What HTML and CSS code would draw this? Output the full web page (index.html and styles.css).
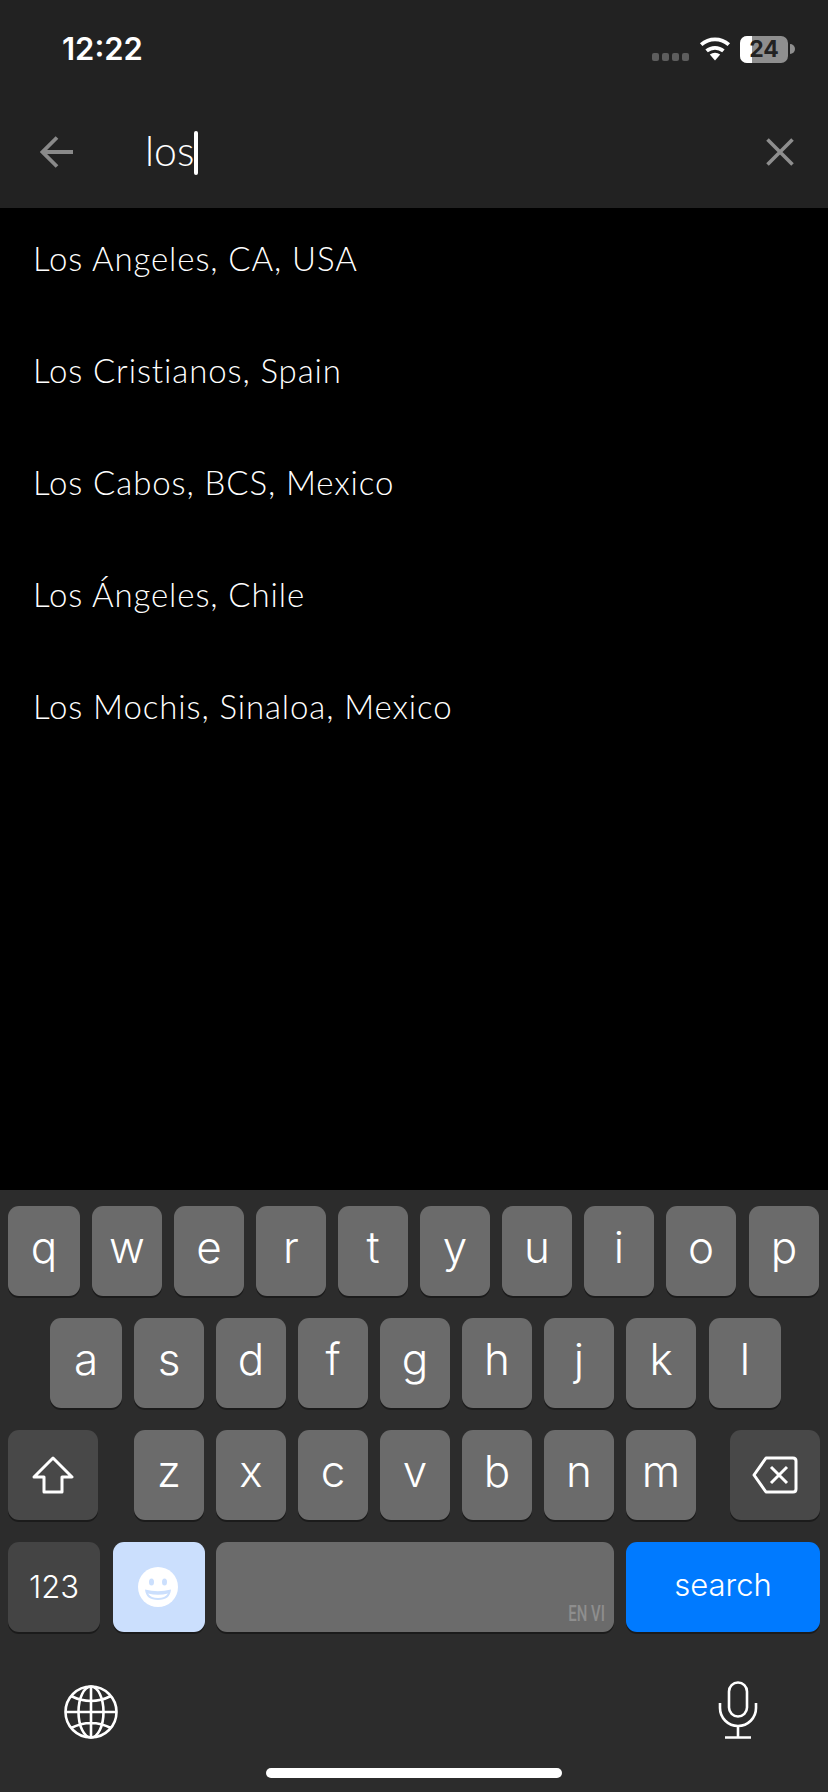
FILE: index.html
```html
<!DOCTYPE html>
<html lang="en">
<head>
    <meta charset="UTF-8">
    <title>Search city</title>
    <link rel="stylesheet" href="styles.css">
</head>
<body>
    <div class="page">
        <header class="top">
            <div class="status">
                <span class="time">12:22</span>
                <div class="status-icons">
                    <div class="signal"><i></i><i></i><i></i><i></i></div>
                    <svg class="wifi" width="32" height="25" viewBox="0 0 32 25">
                        <path d="M16 24.500 L10.800 18.600 A8 8 0 0 1 21.200 18.600 Z" fill="#fff"/>
                        <path d="M7.600 14.900 A13 13 0 0 1 24.400 14.900" fill="none" stroke="#fff" stroke-width="3.800"/>
                        <path d="M2.200 8.600 A21 21 0 0 1 29.800 8.600" fill="none" stroke="#fff" stroke-width="3.800"/>
                    </svg>
                    <div class="battery">
                        <div class="battery-fill"></div>
                        <span class="battery-num">24</span>
                    </div>
                    <div class="battery-nub"></div>
                </div>
            </div>
            <div class="search-row">
                <svg class="back" width="34" height="34" viewBox="0 0 34 34">
                    <path d="M33 17H3M17 2.500L2.500 17L17 31.500" fill="none" stroke="#8a8a8a" stroke-width="3.800"/>
                </svg>
                <div class="query">los<span class="caret"></span></div>
                <svg class="clear" width="28" height="28" viewBox="0 0 28 28">
                    <path d="M1.500 1.500L26.500 26.500M26.500 1.500L1.500 26.500" fill="none" stroke="#8e8e8e" stroke-width="3.600"/>
                </svg>
            </div>
        </header>

        <ul class="results">
            <li>Los Angeles, CA, USA</li>
            <li>Los Cristianos, Spain</li>
            <li>Los Cabos, BCS, Mexico</li>
            <li>Los Ángeles, Chile</li>
            <li>Los Mochis, Sinaloa, Mexico</li>
        </ul>

        <div class="keyboard">
            <div class="kb-row">
                <div class="key first">q</div>
                <div class="key">w</div>
                <div class="key">e</div>
                <div class="key">r</div>
                <div class="key">t</div>
                <div class="key">y</div>
                <div class="key">u</div>
                <div class="key">i</div>
                <div class="key">o</div>
                <div class="key nudge">p</div>
            </div>
            <div class="kb-row indent">
                <div class="key first">a</div>
                <div class="key">s</div>
                <div class="key">d</div>
                <div class="key">f</div>
                <div class="key">g</div>
                <div class="key">h</div>
                <div class="key">j</div>
                <div class="key">k</div>
                <div class="key nudge first">l</div>
            </div>
            <div class="kb-row">
                <div class="key dark wide">
                    <svg width="44" height="38" viewBox="0 0 44 38">
                        <path d="M22 2L41 21H31V36H13V21H3Z" fill="none" stroke="#fff" stroke-width="3" stroke-linejoin="round"/>
                    </svg>
                </div>
                <div class="key letters-start">z</div>
                <div class="key">x</div>
                <div class="key">c</div>
                <div class="key">v</div>
                <div class="key">b</div>
                <div class="key">n</div>
                <div class="key">m</div>
                <div class="key dark wide del">
                    <svg width="46" height="38" viewBox="0 0 46 38">
                        <path d="M14 2H41Q44 2 44 5V33Q44 36 41 36H14L2 19Z" fill="none" stroke="#fff" stroke-width="3" stroke-linejoin="round"/>
                        <path d="M19 11L35 27M35 11L19 27" fill="none" stroke="#fff" stroke-width="3"/>
                    </svg>
                </div>
            </div>
            <div class="kb-row">
                <div class="key dark num">123</div>
                <div class="key emoji">
                    <svg width="40" height="40" viewBox="0 0 40 40">
                        <circle cx="20" cy="20" r="20" fill="#fff"/>
                        <ellipse cx="13.500" cy="15" rx="2.500" ry="3.500" fill="#cbdffd"/>
                        <ellipse cx="26.500" cy="15" rx="2.500" ry="3.500" fill="#cbdffd"/>
                        <path d="M7 22.500Q20 26 33 22.500Q32 33 20 33Q8 33 7 22.500Z" fill="#cbdffd"/>
                        <path d="M10 26.500Q20 29 30 26.500Q27 31 20 31Q13 31 10 26.500Z" fill="#fff"/>
                    </svg>
                </div>
                <div class="key space"><span class="lang">EN VI</span></div>
                <div class="key go">search</div>
            </div>
            <div class="kb-extra">
                <svg width="54" height="54" viewBox="0 0 54 54" fill="none" stroke="#fff" stroke-width="2.600">
                    <circle cx="27" cy="27" r="25.500"/>
                    <ellipse cx="27" cy="27" rx="12.500" ry="25.500"/>
                    <path d="M27 1.500V52.500M1.500 27H52.500M7 11Q27 21 47 11M7 43Q27 33 47 43"/>
                </svg>
                <svg width="40" height="58" viewBox="0 0 40 58" fill="none" stroke="#fff" stroke-width="2.600">
                    <rect x="11" y="1.500" width="18" height="34" rx="9"/>
                    <path d="M2 22V27A18 18 0 0 0 38 27V22M20 45V56M7 56.500H33"/>
                </svg>
            </div>
            <div class="home-bar"></div>
        </div>
    </div>
</body>
</html>
```

FILE: styles.css
```css
*{
    box-sizing: border-box;
}
body{
    margin: 0;
    background-color: #000;
    color: #fff;
    font-family: "Lato", "Liberation Sans", sans-serif;
}
.page{
    width: 828px;
    height: 1792px;
    display: flex;
    flex-direction: column;
    overflow: hidden;
}

/* top bar */
.top{
    height: 208px;
    background-color: #222222;
}
.status{
    height: 106px;
    padding: 30px 33px 0 62px;
    display: flex;
    justify-content: space-between;
}
.time{
    font-family: "Inter", sans-serif;
    font-weight: 600;
    font-size: 31px;
    line-height: 38px;
}
.status-icons{
    display: flex;
    align-items: flex-start;
}
.signal{
    display: flex;
    gap: 2.500px;
    margin: 23px 10px 0 0;
}
.signal i{
    width: 7.500px;
    height: 7.500px;
    border-radius: 2px;
    background-color: #5d5d5d;
}
.wifi{
    margin: 6px 9px 0 0;
}
.battery{
    position: relative;
    width: 48px;
    height: 27px;
    margin-top: 6px;
    border-radius: 7px;
    background-color: #8f8f8f;
    overflow: hidden;
    text-align: center;
}
.battery-fill{
    position: absolute;
    left: 0;
    top: 0;
    bottom: 0;
    width: 12px;
    background-color: #fff;
}
.battery-num{
    position: relative;
    font-family: "Inter", sans-serif;
    font-weight: 700;
    font-size: 23px;
    line-height: 27px;
    color: #222;
}
.battery-nub{
    width: 5px;
    height: 10px;
    margin: 14px 0 0 2px;
    border-radius: 0 5px 5px 0;
    background-color: #8f8f8f;
}
.search-row{
    display: flex;
    align-items: center;
    height: 92px;
    padding: 0 34px 0 40px;
}
.back{
    flex: none;
}
.query{
    flex: 1;
    margin: -2px 0 0 71px;
    display: flex;
    align-items: center;
    font-weight: 300;
    font-size: 41px;
    line-height: 44px;
}
.caret{
    width: 4px;
    height: 44px;
    margin-top: 3px;
    border-radius: 2px;
    background-color: #fff;
}

/* suggestions */
.results{
    flex: 1;
    list-style: none;
    margin: 0;
    padding: 0 0 0 33px;
}
.results li{
    height: 112px;
    padding-top: 28px;
    font-weight: 300;
    font-size: 33px;
    letter-spacing: 0.9px;
    line-height: 44px;
}

/* keyboard */
.keyboard{
    height: 602px;
    padding-top: 16px;
    background-color: #2c2c2c;
    font-family: "Inter", sans-serif;
    font-weight: 300;
}
.kb-row{
    display: flex;
    gap: 12px;
    height: 90px;
    margin-bottom: 22px;
    padding-left: 8px;
}
.kb-row.indent{
    padding-left: 50px;
}
.key{
    flex: none;
    width: 70px;
    height: 90px;
    display: flex;
    align-items: center;
    justify-content: center;
    padding-bottom: 8px;
    border-radius: 11px;
    background-color: #6b6b6b;
    box-shadow: 0 2px 0 #1b1b1b;
    font-size: 44px;
}
.key.first{
    width: 72px;
}
.key.nudge{
    margin-left: 1px;
}
.key.dark{
    background-color: #484848;
}
.key.wide{
    width: 90px;
    padding-bottom: 0;
}
.key.letters-start{
    margin-left: 24px;
}
.key.del{
    margin-left: 22px;
}
.key.num{
    width: 92px;
    padding-bottom: 2px;
    background-color: #444;
    font-size: 31px;
}
.key.emoji{
    width: 92px;
    margin-left: 1px;
    padding: 0 2px 0 0;
    background-color: #cbdffd;
}
.key.space{
    width: 398px;
    margin-left: -1px;
    padding: 0 9px 7px 0;
    align-items: flex-end;
    justify-content: flex-end;
}
.lang{
    display: block;
    transform: scaleX(0.68);
    transform-origin: right center;
    font-family: "Roboto", sans-serif;
    font-weight: 500;
    font-size: 22px;
    line-height: 22px;
    white-space: nowrap;
    color: #8e8e8e;
}
.key.go{
    width: 194px;
    padding-bottom: 5px;
    background-color: #007aff;
    font-size: 31px;
    font-weight: 300;
}
.kb-extra{
    display: flex;
    justify-content: space-between;
    align-items: flex-start;
    height: 84px;
    margin-top: 26px;
    padding: 23px 70px 0 64px;
}
.kb-extra svg:first-child{
    margin-top: 4px;
}
.home-bar{
    width: 296px;
    height: 10px;
    margin: 26px auto 0;
    border-radius: 5px;
    background-color: #fff;
}
```
